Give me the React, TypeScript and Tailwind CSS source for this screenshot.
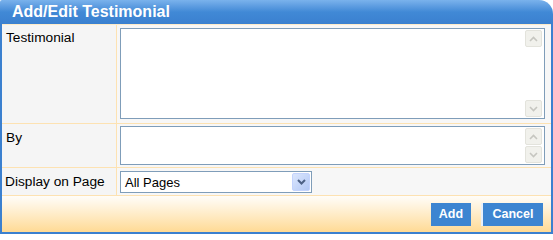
import React from "react";

function ScrollArrow({ dir }: { dir: "up" | "down" }) {
  return (
    <div className="w-[17px] h-[17px] border border-[#e3e3dc] bg-[#f1f1ec] rounded-[2px] flex items-center justify-center">
      <svg width="9" height="6" viewBox="0 0 9 6">
        {dir === "up" ? (
          <path d="M1 5 L4.5 1.5 L8 5" stroke="#c6c6c0" strokeWidth="1.6" fill="none" />
        ) : (
          <path d="M1 1 L4.5 4.5 L8 1" stroke="#c6c6c0" strokeWidth="1.6" fill="none" />
        )}
      </svg>
    </div>
  );
}

function FakeTextarea({ h }: { h: string }) {
  return (
    <div className={`w-[425px] ${h} border border-[#7f9db9] bg-white flex justify-end`}>
      <div className="w-[19px] flex flex-col justify-between py-[1px] pr-[1px] bg-white">
        <ScrollArrow dir="up" />
        <ScrollArrow dir="down" />
      </div>
    </div>
  );
}

export default function App() {
  return (
    <div
      className="w-[553px] h-[234px] flex flex-col bg-white"
      style={{ fontFamily: '"Liberation Sans", Arial, sans-serif' }}
    >
      <div className="h-[24px] shrink-0 rounded-tr-[14px] rounded-tl-[2px] bg-gradient-to-b from-[#7ab2ec] via-[#4189d6] to-[#3b80cf] flex items-center pl-[12px]">
        <span className="text-white font-bold text-[16px] leading-none">Add/Edit Testimonial</span>
      </div>
      <div className="flex-1 flex flex-col border-x-2 border-b-2 border-[#3b80cf] bg-[#f5f5f5]">
        <div className="h-[1px] bg-[#fdebc9]" />
        <div className="flex h-[99px] border-b border-[#fde2b2]">
          <div className="w-[115px] border-r border-[#fde2b2] text-[13.7px] text-black pl-[4px] pt-[3px]">
            Testimonial
          </div>
          <div className="flex-1 pl-[3px] pt-[3px] bg-[#f7f7f7]">
            <FakeTextarea h="h-[91px]" />
          </div>
        </div>
        <div className="flex h-[44px] border-b border-[#fde2b2]">
          <div className="w-[115px] border-r border-[#fde2b2] text-[13.7px] text-black pl-[4px] pt-[4px]">
            By
          </div>
          <div className="flex-1 pl-[3px] pt-[2px] bg-[#f7f7f7]">
            <FakeTextarea h="h-[39px]" />
          </div>
        </div>
        <div className="flex h-[28px] border-b border-[#fde2b2]">
          <div className="w-[115px] border-r border-[#fde2b2] text-[13.7px] text-black pl-[3px] pt-[4px]">
            Display on Page
          </div>
          <div className="flex-1 pl-[3px] pt-[3px] bg-[#f7f7f7]">
            <div className="w-[192px] h-[22px] border border-[#7f9db9] bg-white flex items-center justify-between">
              <span className="text-[13px] text-black pl-[4px] pt-[1px]">All Pages</span>
              <div className="w-[18px] h-[18px] mr-[1px] bg-gradient-to-br from-[#dbe6fd] to-[#b3c8f5] border border-[#c3d3fd] rounded-[2px] flex items-center justify-center">
                <svg width="9" height="6" viewBox="0 0 9 6">
                  <path d="M1 1 L4.5 4.5 L8 1" stroke="#4d6185" strokeWidth="2" fill="none" />
                </svg>
              </div>
            </div>
          </div>
        </div>
        <div className="flex-1 bg-gradient-to-b from-[#fffdf9] to-[#ffda94] flex justify-end items-center gap-[10px] pr-[8px] pt-[1px]">
          <button className="h-[23px] w-[40px] bg-[#3d85d1] text-white font-bold text-[12.5px]">
            Add
          </button>
          <button className="h-[23px] w-[62px] bg-[#3d85d1] text-white font-bold text-[12.5px] border-l-2 border-[#e8f0fb]">
            Cancel
          </button>
        </div>
      </div>
    </div>
  );
}
